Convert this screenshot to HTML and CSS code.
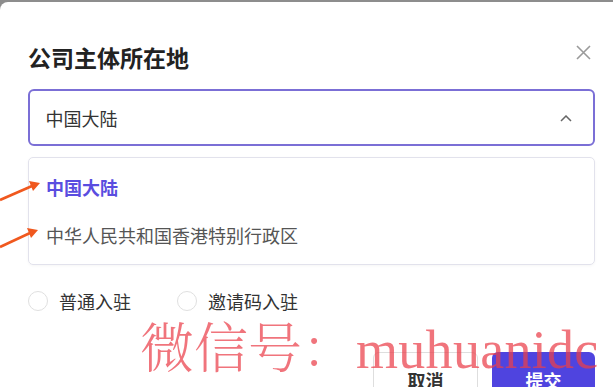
FILE: index.html
```html
<!DOCTYPE html>
<html>
<head>
    <meta charset="utf-8">
    <title>公司主体所在地</title>
    <link rel="stylesheet" href="styles.css">
</head>
<body>
    <div class="modal">
        <div class="modalHeader">
            <h2 class="modalTitle">公司主体所在地</h2>
            <svg class="closeIcon" width="15" height="15" viewBox="0 0 15 15">
                <path d="M1 1 L14 14 M14 1 L1 14" stroke="#9a9a9a" stroke-width="1.6" fill="none"/>
            </svg>
        </div>

        <div class="selectBox">
            <span>中国大陆</span>
            <svg class="chevron" width="12" height="7" viewBox="0 0 12 7">
                <path d="M1 6 L6 1 L11 6" stroke="#666" stroke-width="1.5" fill="none"/>
            </svg>
        </div>

        <ul class="dropdown">
            <li class="active">中国大陆</li>
            <li>中华人民共和国香港特别行政区</li>
        </ul>

        <div class="radioRow">
            <label class="radio"><span class="circle"></span>普通入驻</label>
            <label class="radio"><span class="circle"></span>邀请码入驻</label>
        </div>

        <div class="modalFooter">
            <button class="btn btnCancel">取消</button>
            <button class="btn btnSubmit">提交</button>
        </div>
    </div>

    <!-- annotation arrows -->
    <svg class="arrows" width="50" height="100" viewBox="0 0 50 100">
        <path d="M0 42 L32 28" stroke="#f0581e" stroke-width="2.6" fill="none"/>
        <path d="M40 25 L29 23 L33 33 Z" fill="#f0581e"/>
        <path d="M0 89 L30 75" stroke="#f0581e" stroke-width="2.6" fill="none"/>
        <path d="M38 72 L27 70 L31 80 Z" fill="#f0581e"/>
    </svg>

    <div class="watermark">微信号：<span class="wmLatin">muhuanidc</span></div>
</body>
</html>
```

FILE: styles.css
```css
body {
    margin: 0;
    background-color: #8d8d8d;
    font-family: "Noto Sans CJK SC", "Noto Sans", sans-serif;
    width: 613px;
    height: 387px;
    overflow: hidden;
    position: relative;
}

.modal {
    margin-top: 2px;
    height: 385px;
    background-color: #fff;
    border-top-left-radius: 8px;
    padding: 0 18px 0 28px;
    box-sizing: border-box;
}

.modalHeader {
    display: flex;
    justify-content: space-between;
    align-items: center;
    padding-top: 39px;
    height: 32px;
}

.modalTitle {
    margin: 0;
    font-size: 23px;
    line-height: 32px;
    font-weight: 600;
    color: #222;
}

.closeIcon {
    margin-right: 4px;
    margin-top: -10px;
}

.selectBox {
    margin-top: 16px;
    height: 57px;
    box-sizing: border-box;
    border: 2px solid #7b6fd6;
    border-radius: 6px;
    display: flex;
    align-items: center;
    justify-content: space-between;
    padding: 0 21px 0 15.5px;
    font-size: 18px;
    color: #333;
}

.chevron {
    margin-top: 1px;
}

.dropdown {
    list-style: none;
    margin: 11px 0 0 0;
    padding: 5px 0;
    border: 1px solid #e2e2ec;
    border-radius: 5px;
    box-shadow: 0 1px 3px rgba(0, 0, 0, 0.04);
}

.dropdown li {
    height: 48px;
    line-height: 48px;
    padding-left: 17px;
    font-size: 18px;
    color: #555;
}

.dropdown li.active {
    color: #5a4de0;
    font-weight: 700;
}

.radioRow {
    display: flex;
    margin-top: 26px;
    gap: 46px;
}

.radio {
    display: flex;
    align-items: center;
    gap: 11px;
    font-size: 18px;
    color: #333;
    height: 20px;
}

.circle {
    width: 20px;
    height: 20px;
    box-sizing: border-box;
    border: 1.5px solid #e0e0e0;
    border-radius: 50%;
}

.modalFooter {
    display: flex;
    justify-content: flex-end;
    gap: 14px;
    margin-top: 41px;
}

.btn {
    height: 56px;
    border-radius: 6px;
    font-family: inherit;
    font-size: 18px;
    font-weight: 700;
    cursor: pointer;
}

.btnCancel {
    width: 105px;
    background-color: #fff;
    border: 1.5px solid #dedede;
    color: #333;
}

.btnSubmit {
    width: 103px;
    background-color: #4f44df;
    border: none;
    color: #fff;
}

.arrows {
    position: absolute;
    left: 0;
    top: 158px;
}

.watermark {
    position: absolute;
    left: 140px;
    top: 315px;
    font-family: "Noto Serif CJK SC", "AR PL UMing CN", "Liberation Serif", serif;
    font-size: 54px;
    line-height: 60px;
    font-weight: 300;
    color: rgba(234, 62, 74, 0.72);
    white-space: nowrap;
    pointer-events: none;
}

.wmLatin {
    font-family: "Liberation Serif", serif;
    font-weight: 400;
    font-size: 54px;
    letter-spacing: 0.3px;
}
```
